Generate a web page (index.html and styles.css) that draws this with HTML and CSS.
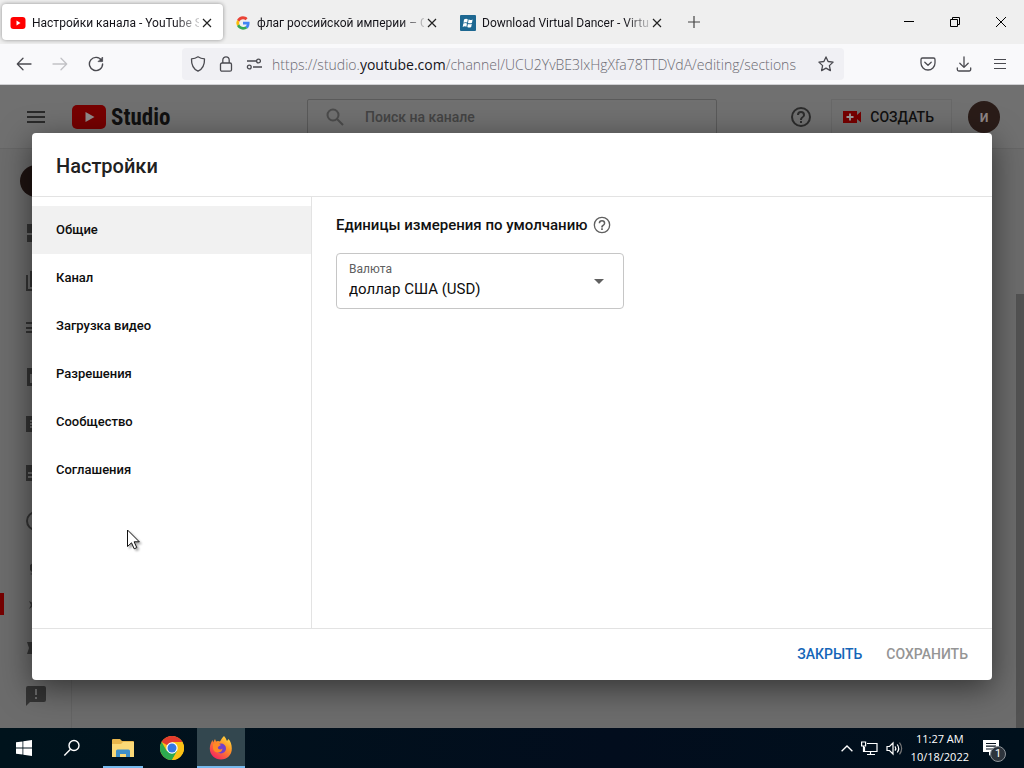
FILE: index.html
```html
<!DOCTYPE html>
<html lang="ru">
<head>
<meta charset="utf-8">
<title>Настройки канала - YouTube Studio</title>
<link rel="stylesheet" href="styles.css">
</head>
<body>
<header class="tabs">
  <div class="tab tab-active">
    <svg class="fav" width="16" height="16" viewBox="0 0 16 16"><rect x="0.5" y="2" width="15" height="12" rx="3" fill="#f00"/><path d="M6.5 5.5v5l4-2.500z" fill="#fff"/></svg>
    <span class="tab-title">Настройки канала - YouTube S</span>
    <button class="tab-close" aria-label="Закрыть вкладку"><svg width="10" height="10" viewBox="0 0 10 10"><path d="M1 1l8 8M9 1l-8 8" stroke="#222" stroke-width="1.200"/></svg></button>
  </div>
  <div class="tab">
    <svg class="fav" width="16" height="16" viewBox="0 0 48 48"><path fill="#4285f4" d="M43.600 20H24v8.500h11.300c-.6 3-2.300 5.200-4.800 6.800l6.600 5.300C41.500 36.500 44.500 30 43.600 20z"/><path fill="#ea4335" d="M24 12.500c3 0 5.600 1.100 7.700 3l5.900-5.900C34 6.200 29.300 4 24 4 16.200 4 9.400 8.400 6.100 15l6.900 5.300c1.600-4.700 6-7.800 11-7.800z"/><path fill="#fbbc05" d="M13 28c-.9-2.600-.9-5.200 0-7.700L6.100 15a20 20 0 0 0 0 18.200z"/><path fill="#34a853" d="M24 44c5.400 0 9.900-1.800 13.100-4.400l-6.600-5.300c-5.700 3.800-14.400 2-17.500-6.300l-6.900 5.200C9.400 39.700 16.200 44 24 44z"/></svg>
    <span class="tab-title">флаг российской империи – G</span>
    <button class="tab-close" aria-label="Закрыть вкладку"><svg width="10" height="10" viewBox="0 0 10 10"><path d="M1 1l8 8M9 1l-8 8" stroke="#222" stroke-width="1.200"/></svg></button>
  </div>
  <div class="tab">
    <svg class="fav" width="16" height="16" viewBox="0 0 16 16"><rect width="16" height="16" rx="1" fill="#1d6791"/><path fill="#fff" d="M4 4.500q2-1.200 3.800-.2L7.200 7.500q-1.800-.8-3.700.2zM8.600 4.600q1.800.9 4-.1L12 7.700q-2 1-4 .2zM3.300 8.600q1.900-1 3.700-.1l-.6 3.200q-1.700-.9-3.700.2zM7.900 8.900q1.800.8 3.900-.2l-.6 3.300q-2 1-3.900 0z"/></svg>
    <span class="tab-title">Download Virtual Dancer - Virtu</span>
    <button class="tab-close" aria-label="Закрыть вкладку"><svg width="10" height="10" viewBox="0 0 10 10"><path d="M1 1l8 8M9 1l-8 8" stroke="#222" stroke-width="1.200"/></svg></button>
  </div>
  <button class="new-tab" aria-label="Новая вкладка"><svg width="12" height="12" viewBox="0 0 12 12"><path d="M6 0v12M0 6h12" stroke="#444" stroke-width="1.200"/></svg></button>
  <div class="win-controls">
    <button class="win" aria-label="Свернуть"><svg width="12" height="12" viewBox="0 0 12 12"><path d="M1 5.500h10" stroke="#000"/></svg></button>
    <button class="win" aria-label="Восстановить"><svg width="12" height="12" viewBox="0 0 12 12" fill="none" stroke="#000"><path d="M1.500 3.500h7v7h-7zM3.500 3.500v-2h7v7h-2"/></svg></button>
    <button class="win" aria-label="Закрыть"><svg width="12" height="12" viewBox="0 0 12 12"><path d="M1 1l10 10M11 1L1 11" stroke="#000"/></svg></button>
  </div>
</header>

<nav class="toolbar">
  <div class="nav-buttons">
    <button aria-label="Назад"><svg width="16" height="16" viewBox="0 0 16 16" fill="none" stroke="#4a4a50" stroke-width="1.300" stroke-linecap="round" stroke-linejoin="round"><path d="M15 8H1.500M7 2.200L1.300 8 7 13.800"/></svg></button>
    <button aria-label="Вперёд"><svg width="16" height="16" viewBox="0 0 16 16" fill="none" stroke="#c2c2c6" stroke-width="1.300" stroke-linecap="round" stroke-linejoin="round"><path d="M1 8h13.500M9 2.200L14.700 8 9 13.800"/></svg></button>
    <button aria-label="Обновить"><svg width="16" height="16" viewBox="0 0 16 16" fill="none" stroke="#4a4a50" stroke-width="1.400" stroke-linecap="round" stroke-linejoin="round"><path d="M13.600 4.500A6.600 6.600 0 1 0 14.600 8"/><path d="M14.600 1.400v4.200h-4.200z" fill="#4a4a50" stroke-width=".8"/></svg></button>
  </div>
  <div class="url">
    <svg width="16" height="16" viewBox="0 0 16 16" fill="none" stroke="#4a4a50" stroke-width="1.300" stroke-linejoin="round"><path d="M8 .8c2 1.400 4 2 6.500 2.100.2 5.600-1.500 9.800-6.500 12.300C3 12.700 1.300 8.500 1.500 2.900 4 2.800 6 2.200 8 .8z"/></svg>
    <svg width="16" height="16" viewBox="0 0 16 16" fill="none" stroke="#4a4a50" stroke-width="1.300"><rect x="2.500" y="7" width="11" height="8.200" rx="1.500"/><path d="M4.800 7V4a3.200 3.200 0 0 1 6.400 0v3"/></svg>
    <svg width="16" height="16" viewBox="0 0 16 16" fill="none" stroke="#4a4a50" stroke-width="1.300"><path d="M1 5h9M7 11h9"/><circle cx="12.500" cy="5" r="1.900"/><circle cx="3.300" cy="11" r="1.900"/></svg>
    <span class="address">https://studio.<b>youtube.com</b>/channel/UCU2YvBE3lxHgXfa78TTDVdA/editing/sections</span>
    <button aria-label="Добавить в закладки"><svg width="16" height="16" viewBox="0 0 16 16" fill="none" stroke="#4a4a50" stroke-width="1.300" stroke-linejoin="round"><path d="M8 .9l2.100 4.600 5 .6-3.700 3.500 1 5L8 12.100l-4.400 2.500 1-5L.9 6.100l5-.6z"/></svg></button>
  </div>
  <div class="tools">
    <button aria-label="Pocket"><svg width="16" height="16" viewBox="0 0 16 16" fill="none" stroke="#4a4a50" stroke-width="1.300" stroke-linecap="round" stroke-linejoin="round"><path d="M2.500 2h11a1.500 1.500 0 0 1 1.500 1.500V7A7 7 0 0 1 1 7V3.500A1.500 1.500 0 0 1 2.500 2zM4.800 6.300L8 9.200l3.200-2.900"/></svg></button>
    <button aria-label="Загрузки"><svg width="16" height="16" viewBox="0 0 16 16" fill="none" stroke="#4a4a50" stroke-width="1.300" stroke-linecap="round" stroke-linejoin="round"><path d="M8 .8v10.400M3.800 7.200L8 11.400l4.200-4.200M1.300 12v1.500a1.500 1.500 0 0 0 1.500 1.500h10.400a1.500 1.500 0 0 0 1.500-1.500V12"/></svg></button>
    <button aria-label="Меню"><svg width="16" height="16" viewBox="0 0 16 16"><path d="M2 3.500h12M2 7.500h12M2 12.500h12" stroke="#4a4a50" stroke-width="1.200"/></svg></button>
  </div>
</nav>

<main class="page">
  <div class="studio-bar">
    <button class="burger" aria-label="Меню Studio"><svg width="20" height="14" viewBox="0 0 20 14"><path d="M1 2h18M1 7h18M1 12h18" stroke="#2a2a2a" stroke-width="2"/></svg></button>
    <div class="logo">
      <svg width="34" height="24" viewBox="0 0 34 24"><rect width="34" height="24" rx="5" fill="#760000"/><path d="M13.500 7v10l9-5z" fill="#8f8a8a"/></svg>
      <span>Studio</span>
    </div>
    <div class="search">
      <svg width="18" height="18" viewBox="0 0 18 18" fill="none" stroke="#4b4b4b" stroke-width="2"><circle cx="7" cy="7" r="5.500"/><path d="M11 11l6 6"/></svg>
      <input type="text" aria-label="Поиск на канале" placeholder="Поиск на канале">
    </div>
    <div class="actions">
      <button aria-label="Справка"><svg width="24" height="24" viewBox="0 0 24 24" fill="#2c2c2c"><path d="M11 18h2v-2h-2zm1-16a10 10 0 1 0 0 20 10 10 0 0 0 0-20zm0 18a8 8 0 1 1 0-16 8 8 0 0 1 0 16zm0-14a4 4 0 0 0-4 4h2a2 2 0 1 1 4 0c0 2-3 1.750-3 5h2c0-2.250 3-2.500 3-5a4 4 0 0 0-4-4z"/></svg></button>
      <button class="create"><svg width="19" height="14" viewBox="0 0 19 14"><path fill="#760000" d="M0 1h14v4l4-3.500v11L14 9v4H0z"/><path d="M7 3.500v7M3.500 7h7" stroke="#999" stroke-width="1.800"/></svg><span>СОЗДАТЬ</span></button>
      <span class="avatar">и</span>
    </div>
  </div>
  <div class="studio-body">
    <aside class="rail">
      <span class="rail-avatar"></span>
      <div class="rail-list">
        <svg viewBox="0 0 20 20"><path d="M1 1h8v9H1zM1 12h8v7H1zM11 1h8v6h-8zM11 9h8v10h-8z"/></svg>
        <svg viewBox="0 0 20 20"><path d="M0 4h2v14h14v2H0zM4 0h16v16H4z"/></svg>
        <svg viewBox="0 0 20 20"><path d="M0 3h13v2H0zM0 8h13v2H0zM0 12h9v2H0z"/></svg>
        <svg viewBox="0 0 20 20"><path d="M1 1h18v18H1zM4 7v9h2V7z" fill-rule="evenodd"/></svg>
        <svg viewBox="0 0 20 20"><path d="M0 1h20v16H0zM4 5v2h2V5zM4 8v2h2V8zM4 11v2h2v-2z" fill-rule="evenodd"/></svg>
        <svg viewBox="0 0 20 20"><path d="M0 2h20v16H0zM2 9v2h9V9zM2 13v2h9v-2z" fill-rule="evenodd"/></svg>
        <svg viewBox="0 0 20 20"><circle cx="10" cy="10" r="9" fill="none" stroke="#343434" stroke-width="2"/></svg>
        <svg viewBox="0 0 20 20"><path d="M4 6l6-4v4L7 8l5 4v5l-8-2 3-1-3-3z"/></svg>
        <div class="current"><svg viewBox="0 0 20 20"><path d="M3 7l4 2 3-4v12l-4-4-3 2 2-4z"/></svg></div>
        <svg viewBox="0 0 20 20"><path d="M1 4h5v3l3-3v12l-3-3v3H1l2-6z"/></svg>
        <svg viewBox="0 0 20 20"><path d="M2 0h16q2 0 2 2v12q0 2-2 2H4l-4 4V2q0-2 2-2zM9 3v6h2V3zM9 11v2h2v-2z" fill-rule="evenodd"/></svg>
      </div>
    </aside>
    <section class="canvas"></section>
    <div class="scrollbar"></div>
  </div>

  <section class="dialog" role="dialog" aria-labelledby="dialog-title">
    <h1 id="dialog-title">Настройки</h1>
    <div class="dialog-body">
      <nav class="menu">
        <a class="selected" href="#general">Общие</a>
        <a href="#channel">Канал</a>
        <a href="#upload">Загрузка видео</a>
        <a href="#permissions">Разрешения</a>
        <a href="#community">Сообщество</a>
        <a href="#agreements">Соглашения</a>
      </nav>
      <div class="content">
        <h2>Единицы измерения по умолчанию
          <svg width="20" height="20" viewBox="0 0 24 24" fill="#606060"><path d="M11 18h2v-2h-2zm1-16a10 10 0 1 0 0 20 10 10 0 0 0 0-20zm0 18.400a8.400 8.400 0 1 1 0-16.800 8.400 8.400 0 0 1 0 16.800zm0-14.400a4 4 0 0 0-4 4h1.800a2.200 2.200 0 1 1 4.400 0c0 2-3.200 1.750-3.200 5h2c0-2.250 3-2.500 3-5a4 4 0 0 0-4-4z"/></svg>
        </h2>
        <div class="field">
          <label for="currency">Валюта</label>
          <select id="currency"><option>доллар США (USD)</option></select>
          <svg class="caret" width="10" height="5" viewBox="0 0 10 5"><path d="M0 0h10L5 5z" fill="#606060"/></svg>
        </div>
      </div>
    </div>
    <footer class="dialog-foot">
      <button class="close">ЗАКРЫТЬ</button>
      <button class="save" disabled>СОХРАНИТЬ</button>
    </footer>
  </section>
  <svg class="cursor" width="18" height="24" viewBox="0 0 18 24"><path d="M1.500 1v16.500l4-3.700 2.700 6 2.600-1.200-2.700-5.800h5.200z" fill="#fff" stroke="#111"/></svg>
</main>

<footer class="taskbar">
  <div class="system">
    <button class="task" aria-label="Пуск"><svg width="16" height="16" viewBox="0 0 16 16" fill="#fff"><path d="M0 2.300l6.500-.9v6.100H0zM7.300 1.300L16 0v7.500H7.300zM0 8.400h6.500v6.200L0 13.700zM7.300 8.400H16V16l-8.700-1.200z"/></svg></button>
    <button class="task" aria-label="Поиск"><svg width="18" height="18" viewBox="0 0 18 18" fill="none" stroke="#fff" stroke-width="1.400"><circle cx="11" cy="6.500" r="5"/><path d="M7.500 10.200L1.300 16.500"/></svg></button>
  </div>
  <div class="apps">
    <button class="task open" aria-label="Проводник"><svg width="22" height="19" viewBox="0 0 22 19"><path d="M0 1q0-1 1-1h7l2 2h11q1 0 1 1v14H0z" fill="#e8b64c"/><path d="M0 5h9l2-2h11v15H0z" fill="#fbd977"/><path d="M4 18v-6q0-1.500 1.500-1.500h11q1.500 0 1.500 1.500v6h-4v-3H8v3z" fill="#3f8fc9"/></svg></button>
    <button class="task" aria-label="Chrome"><svg width="24" height="24" viewBox="0 0 24 24"><circle cx="12" cy="12" r="12" fill="#fbc116"/><path d="M12 12L1.600 6A12 12 0 0 1 22.400 6H12z" fill="#e33b2e"/><path d="M1.600 6A12 12 0 0 0 12 24l5.200-9L12 12l-5.200 3z" fill="#2da94f"/><path d="M22.400 6H12v6l5.200 3L12 24A12 12 0 0 0 22.400 6z" fill="#fbc116"/><circle cx="12" cy="12" r="5.700" fill="#fff"/><circle cx="12" cy="12" r="4.500" fill="#3478e5"/></svg></button>
    <button class="task active" aria-label="Firefox"><svg width="24" height="24" viewBox="0 0 24 24"><defs><linearGradient id="fire" x1="1" y1="0" x2="0.300" y2="1"><stop offset="0" stop-color="#fff04a"/><stop offset="0.450" stop-color="#ff9426"/><stop offset="1" stop-color="#f5255e"/></linearGradient></defs><path d="M15 0q2 2 3 5l1.500-2c2 2 3.300 5.500 3.300 9.500C23 19 18 23.500 12 23.500S.7 19 .8 12.500C.9 9 2 6.500 3.500 4l.6 2.500L6 3l1 2.500q2-.8 4 0Q12.500 2 15 0z" fill="url(#fire)"/><circle cx="12" cy="12.500" r="5" fill="#7240c9"/><path d="M4 8q4-2.500 8 1l-2.500 1.500q-1.500 1 0 2.500 2 1 4-.5-.5 4-4.500 4-4 0-5-4z" fill="#ff8a25"/></svg></button>
  </div>
  <div class="tray">
    <svg width="12" height="7" viewBox="0 0 12 7" fill="none" stroke="#fff" stroke-width="1.300"><path d="M.6 6.300L6 1l5.400 5.300"/></svg>
    <svg width="17" height="15" viewBox="0 0 17 15" fill="none" stroke="#fff" stroke-width="1.200"><path d="M6 2.500h10v8H3.500V6M9.500 10.500v3M6 13.500h8M.6 1h4v4h-4zM2.500 5v6"/></svg>
    <svg width="17" height="15" viewBox="0 0 17 15" fill="none" stroke="#fff" stroke-width="1.200"><path d="M1 5.500h2.500L7 2v11L3.500 9.500H1zM9 5.300q1.600 2.200 0 4.400M11.200 3.500q3 4 0 8"/><path d="M13.500 1.700q4.300 5.800 0 11.600" stroke="#777"/></svg>
    <time class="clock"><span>11:27 AM</span><span>10/18/2022</span></time>
    <button class="notify" aria-label="Уведомления"><svg width="16" height="16" viewBox="0 0 16 16"><path d="M0 0h16v12H9l-3 4v-4H0z" fill="#fff"/><path d="M3 3.500h10M3 6.200h10M3 9h7" stroke="#08131f" stroke-width="1.200"/></svg><span class="badge">1</span></button>
  </div>
</footer>
</body>
</html>
```

FILE: styles.css
```css
* { box-sizing: border-box; }
body {
  margin: 0;
  height: 100vh;
  display: flex;
  flex-direction: column;
  overflow: hidden;
  font-family: Roboto, sans-serif;
}
button {
  border: 0;
  padding: 0;
  background: none;
  font: inherit;
  color: inherit;
  display: flex;
  align-items: center;
  justify-content: center;
}
svg { display: block; flex: none; }

/* Browser tabs */
.tabs {
  height: 44px;
  flex: none;
  display: flex;
  align-items: center;
  background: #efefef;
  font: 12px/20px Roboto, sans-serif;
  color: #15141a;
}
.tab {
  width: 221px;
  height: 36px;
  margin: 0 2px;
  padding: 2px 8px 0;
  display: flex;
  align-items: center;
  gap: 6px;
  border-radius: 4px;
}
.tab-active { background: #fff; box-shadow: 0 0 4px #0006; }
.tab-title {
  flex: 1;
  min-width: 0;
  white-space: nowrap;
  mask-image: linear-gradient(to left, #0003, #000 24px);
}
.tab-close { width: 12px; height: 16px; margin: 0 2px 0 -4px; }
.new-tab { width: 36px; height: 36px; margin-left: 1px; }
.win-controls { margin-left: auto; display: flex; }
.win { width: 46px; height: 44px; }

/* Navigation toolbar */
.toolbar {
  height: 41px;
  flex: none;
  display: flex;
  align-items: center;
  background: #f9f9fb;
  border-bottom: 1px solid #d0d0d3;
}
.nav-buttons { display: flex; gap: 20px; padding-left: 16px; width: 182px; }
.url {
  flex: 1;
  height: 32px;
  padding: 0 10px 0 8px;
  display: flex;
  align-items: center;
  gap: 12px;
  background: #f0f0f4;
  border-radius: 4px;
}
.address {
  flex: 1;
  margin-left: -2px;
  padding-top: 2px;
  overflow: hidden;
  white-space: nowrap;
  font: 300 14px/20px "Open Sans", sans-serif;
  color: #6b6a72;
}
.address b { font-weight: 400; color: #15141a; }
.tools { width: 180px; padding-right: 16px; display: flex; justify-content: flex-end; gap: 20px; }

/* Dimmed Studio page */
.page {
  flex: 1;
  min-height: 0;
  position: relative;
  display: flex;
  flex-direction: column;
  background: #6c6c6c;
}
.studio-bar {
  height: 64px;
  flex: none;
  display: flex;
  align-items: center;
  padding: 0 24px 0 26px;
  border-bottom: 1px solid #666;
  background: #707070;
}
.burger { width: 20px; height: 20px; margin-right: 26px; }
.logo { display: flex; align-items: center; gap: 5px; width: 235px; }
.logo span { padding-top: 2px; font: 700 23px/28px "Roboto Condensed", "Liberation Sans Narrow", Roboto, sans-serif; color: #101010; }
.search {
  flex: 0 1 410px;
  height: 36px;
  display: flex;
  align-items: center;
  gap: 21px;
  padding: 0 18px;
  border: 1px solid #5a5a5a;
  border-radius: 2px;
}
.search input {
  flex: 1;
  min-width: 0;
  border: 0;
  padding: 0;
  background: none;
  font: 500 14px/20px Roboto, sans-serif;
}
.search input::placeholder { color: #434343; opacity: 1; }
.actions { margin-left: auto; display: flex; align-items: center; gap: 16px; }
.create {
  height: 36px;
  padding: 0 17px 0 11px;
  gap: 8px;
  border: 1px solid #686868;
  font-weight: 500;
  font-size: 14px;
  color: #101010;
}
.actions .create { margin-left: 2px; }
.avatar {
  width: 32px;
  height: 32px;
  border-radius: 50%;
  display: grid;
  place-items: center;
  background: #2a1c18;
  color: #8d8583;
  font-size: 16px;
  font-weight: 500;
}
.studio-body { flex: 1; min-height: 0; display: flex; }
.rail {
  width: 72px;
  flex: none;
  padding: 16px 20px 0;
  border-right: 1px solid #646464;
}
.rail-avatar { display: block; width: 32px; height: 32px; border-radius: 50%; background: #1e1311; }
.rail-list { display: flex; flex-direction: column; margin: 12px -20px 0; }
.rail-list svg { width: 72px; height: 48px; padding: 14px 26px; fill: #343434; }
.rail-list .current {
  height: 22px;
  margin-bottom: 9px;
  display: flex;
  align-items: center;
  border-left: 4px solid #760000;
}
.current svg { margin-left: -4px; }

.canvas { flex: 1; }
.scrollbar {
  width: 8px;
  margin-top: 145px;
  background: #525252;
}

/* Settings dialog */
.dialog {
  position: absolute;
  inset: 48px 32px;
  display: flex;
  flex-direction: column;
  background: #fff;
  border-radius: 4px;
  box-shadow: 0 8px 32px #0008;
  color: #111;
}
.dialog h1 {
  margin: 0;
  padding: 21px 24px 18px;
  font-size: 20px;
  line-height: 24px;
  font-weight: 500;
  color: #212121;
  border-bottom: 1px solid #e3e3e3;
}
.dialog-body { flex: 1; min-height: 0; display: flex; }
.menu {
  width: 280px;
  padding-top: 9px;
  border-right: 1px solid #e3e3e3;
}
.menu a {
  display: block;
  padding: 0 24px;
  font-size: 13px;
  line-height: 48px;
  font-weight: 500;
  color: #0d0d0d;
  text-decoration: none;
}
.menu .selected { background: #f1f1f1; }
.content { flex: 1; padding: 16px 24px; }
.content h2 {
  margin: 0 0 16px;
  display: flex;
  align-items: center;
  gap: 5px;
  font-size: 15px;
  line-height: 24px;
  font-weight: 500;
}
.field { position: relative; width: 288px; }
.field label {
  position: absolute;
  top: 8px;
  left: 13px;
  font-size: 12px;
  line-height: 16px;
  color: #606060;
}
.field select {
  appearance: none;
  width: 100%;
  height: 56px;
  padding: 15px 12px 0;
  border: 1px solid #c6c6c6;
  border-radius: 4px;
  background: #fff;
  color: #0d0d0d;
  font: 15px/24px Roboto, sans-serif;
}
.caret { position: absolute; right: 20px; top: 26px; pointer-events: none; }
.dialog-foot {
  height: 52px;
  display: flex;
  justify-content: flex-end;
  align-items: center;
  gap: 24px;
  padding: 0 24px 2px;
  border-top: 1px solid #e3e3e3;
  font-size: 14px;
  font-weight: 500;
}
.close { color: #1565b8; }
.save { color: #959595; }
.cursor { position: absolute; left: 126px; top: 444px; filter: drop-shadow(2px 2px 1px #0005); }

/* Windows taskbar */
.taskbar {
  height: 40px;
  flex: none;
  display: flex;
  background: linear-gradient(90deg, #00131c, #020d1d 60%, #00101c);
  color: #fff;
}
.system { display: flex; }
.apps { display: flex; gap: 1px; margin-left: 3px; }
.task { width: 48px; height: 40px; }
.open { background: linear-gradient(#76b9ed, #76b9ed) center bottom / 40px 2px no-repeat; }
.active { background: #33474f; box-shadow: inset 0 -2px #76b9ed; }
.tray {
  margin-left: auto;
  display: flex;
  align-items: center;
  gap: 8px;
  padding-right: 25px;
}
.clock { display: grid; font: 11px/18px "Open Sans", sans-serif; text-align: center; }
.notify { position: relative; margin-left: 6px; }
.badge {
  position: absolute;
  left: 7px;
  top: 6px;
  width: 16px;
  height: 16px;
  border: 1px solid #8d9399;
  border-radius: 50%;
  background: #2d343c;
  font-size: 11px;
  line-height: 14px;
}
```
